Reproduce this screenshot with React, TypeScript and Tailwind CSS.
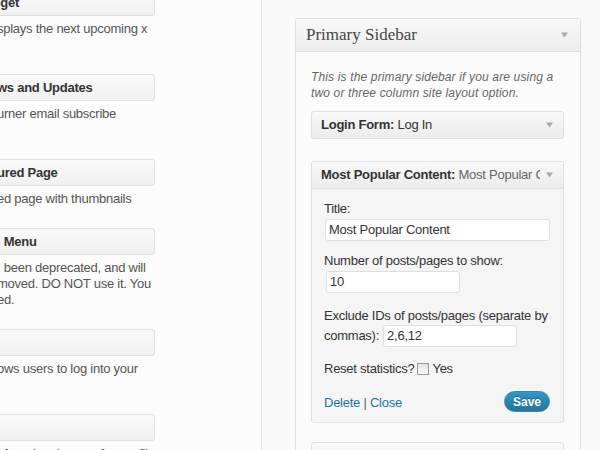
import React from "react";

type LeftWidget = { title: string; lines: string[] };

const leftWidgets: LeftWidget[] = [
  { title: "iget", lines: ["splays the next upcoming x", ""] },
  { title: "ws and Updates", lines: ["urner email subscribe", ""] },
  { title: "ured Page", lines: ["ed page with thumbnails"] },
  { title: "  Menu", lines: ["  been deprecated, and will", "moved. DO NOT use it. You", "ed."] },
  { title: "", lines: ["ows users to log into your", ""] },
  { title: "", lines: ["of random images from a fil", ""] },
];

function Arrow() {
  return (
    <svg width="7" height="6" viewBox="0 0 7 6" className="shrink-0">
      <path d="M0 0.5 L7 0.5 L3.5 5.5 Z" fill="#a9a9a9" />
    </svg>
  );
}

function LeftColumn() {
  return (
    <div className="h-[450px] w-[262px] shrink-0 overflow-hidden border-r border-[#dfdfdf] bg-[#fcfcfc]">
      <div className="-mt-[11px]">
        {leftWidgets.map((w, i) => (
          <div key={i} className="mb-[21px]">
            <div className="-ml-[10px] flex h-[27px] w-[165px] items-center rounded-[3px] border border-[#dfdfdf] bg-[linear-gradient(to_bottom,#f9f9f9,#f1f1f1)] pl-[6px]">
              <span className="whitespace-pre text-[13px] font-bold text-[#333]">{w.title}</span>
            </div>
            <div className="-ml-[3px] mt-[5px] text-[13px] leading-4 text-[#555]">
              {w.lines.map((l, j) => (
                <div key={j} className="h-4 whitespace-pre">
                  {l}
                </div>
              ))}
            </div>
          </div>
        ))}
      </div>
    </div>
  );
}

function TextInput({ value, className }: { value: string; className: string }) {
  return (
    <div
      className={`flex h-[22px] shrink-0 items-center rounded-[3px] border border-[#dfdfdf] bg-white px-[3px] text-[13px] text-[#333] ${className}`}
    >
      {value}
    </div>
  );
}

function MostPopularWidget() {
  return (
    <div className="mt-[22px] rounded-[3px] border border-[#dfdfdf] bg-[#f5f5f5]">
      <div className="flex h-[27px] items-center border-b border-[#dfdfdf] bg-[linear-gradient(to_bottom,#f9f9f9,#ececec)] pl-[9px] pr-[10px]">
        <div className="min-w-0 flex-1 overflow-hidden whitespace-nowrap text-[13px] text-[#333]">
          <span className="font-bold">Most Popular Content:</span>{" "}
          <span className="text-[#666]">Most Popular Content</span>
        </div>
        <div className="ml-[6px]">
          <Arrow />
        </div>
      </div>

      <div className="px-[12px] pb-[10px] pt-[12px] text-[13px] leading-4 text-[#333]">
        <div>Title:</div>
        <TextInput value="Most Popular Content" className="ml-px mt-[2px] w-[225px]" />

        <div className="mt-[12px]">Number of posts/pages to show:</div>
        <TextInput value="10" className="ml-[2px] mt-[2px] w-[134px]" />

        <div className="mt-[15px] whitespace-nowrap">Exclude IDs of posts/pages (separate by</div>
        <div className="flex h-[24px] items-center whitespace-nowrap">
          <span>commas):</span>
          <TextInput value="2,6,12" className="ml-[4px] w-[134px]" />
        </div>

        <div className="mt-[13px] flex h-4 items-center">
          <span>Reset statistics?</span>
          <span className="ml-[3px] h-[12px] w-[12px] border border-[#9a9a9a] bg-[linear-gradient(to_bottom,#e2e2e2,#fafafa)]" />
          <span className="ml-[3px]">Yes</span>
        </div>

        <div className="mt-[14px] flex h-[21px] items-center justify-between">
          <div className="pt-[2px]">
            <span className="text-[#21759b]">Delete</span>
            <span className="text-[#666]"> | </span>
            <span className="text-[#21759b]">Close</span>
          </div>
          <div className="mr-px flex h-[21px] w-[46px] items-center justify-center rounded-full border border-[#298cba] bg-[linear-gradient(to_bottom,#3396c7,#21759b)] text-[12px] font-bold tracking-normal text-white [text-shadow:0_-1px_0_rgba(0,0,0,0.3)]">
            Save
          </div>
        </div>
      </div>
    </div>
  );
}

function PrimarySidebar() {
  return (
    <div className="w-[286px] rounded-t-[3px] border border-[#dfdfdf] bg-[#fbfbfb]">
      <div className="flex h-[33px] items-center justify-between border-b border-[#dfdfdf] bg-[linear-gradient(to_bottom,#f9f9f9,#ececec)] pl-[10px] pr-[12px]">
        <span className="font-['Liberation_Serif',Georgia,serif] text-[17px] tracking-normal text-[#464646]">
          Primary Sidebar
        </span>
        <Arrow />
      </div>

      <div className="h-[420px] pl-[15px] pr-[16px]">
        <p className="pt-[17px] text-[12px] italic leading-4 tracking-[0.15px] text-[#666]">
          This is the primary sidebar if you are using a<br />
          two or three column site layout option.
        </p>

        <div className="mt-[10px] flex h-[28px] items-center rounded-[3px] border border-[#dfdfdf] bg-[linear-gradient(to_bottom,#f9f9f9,#ececec)] pl-[9px] pr-[10px]">
          <div className="flex-1 text-[13px] text-[#333]">
            <span className="font-bold">Login Form:</span> <span>Log In</span>
          </div>
          <Arrow />
        </div>

        <MostPopularWidget />

        <div className="mt-[19px] h-[40px] rounded-[3px] border border-[#dfdfdf] bg-[linear-gradient(to_bottom,#f9f9f9,#ececec)]" />
      </div>
    </div>
  );
}

export default function App() {
  return (
    <div className="flex h-[450px] w-[600px] overflow-hidden bg-[#f9f9f9] font-['Liberation_Sans',Arial,sans-serif] tracking-[-0.25px]">
      <LeftColumn />
      <div className="flex-1 pl-[33px] pt-[18px]">
        <PrimarySidebar />
      </div>
    </div>
  );
}
